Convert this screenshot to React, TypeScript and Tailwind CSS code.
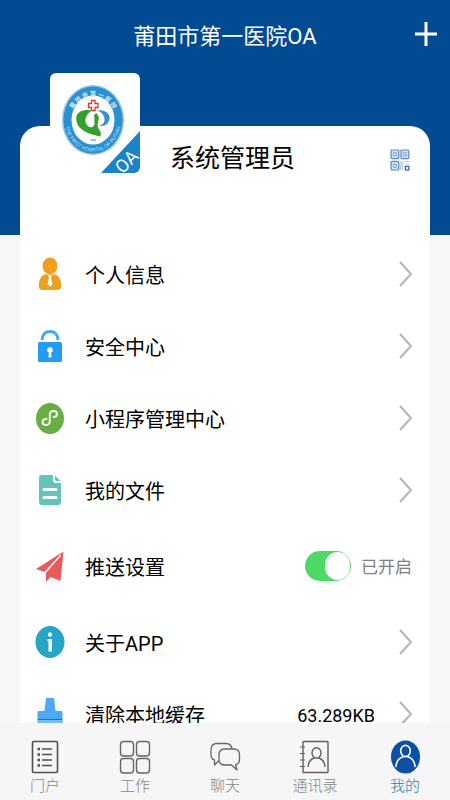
import { useState } from "react";
import type { ReactNode } from "react";
import { clsx } from "clsx";

interface MenuItem {
  id: string;
  label: string;
  icon: ReactNode;
  value?: string;
}

interface TabItem {
  id: string;
  label: string;
  icon: ReactNode;
}

function HospitalLogo() {
  return (
    <svg viewBox="0 0 90 100" className="w-[90px] h-[100px] overflow-visible" role="img" aria-label="莆田市第一医院OA">
      <defs>
        <path id="ring-top" d="M19.500 50a23.500 27 0 0 1 47 0" />
        <path id="ring-bottom" d="M15 47a28 31.500 0 0 0 56 0" />
      </defs>
      <ellipse cx="43" cy="47" rx="31" ry="35" fill="#8cc3ea" />
      <ellipse cx="43" cy="47" rx="29.5" ry="33.5" fill="#2b8fd0" />
      <ellipse cx="43" cy="47" rx="21.5" ry="24.5" fill="#fff" />
      <text fill="#d8edfa" fontSize="6" fontWeight="700" textAnchor="middle" className="font-['Noto_Sans_CJK_SC',sans-serif]">
        <textPath href="#ring-top" startOffset="50%">莆 田 市 第 一 医 院</textPath>
      </text>
      <text fill="#bfe0f5" fontSize="5" textAnchor="middle" className="font-['Liberation_Sans',sans-serif]">
        <textPath href="#ring-bottom" startOffset="50%">THE FIRST HOSPITAL OF PUTIAN</textPath>
      </text>
      <path d="M41.500 27.500h3.500v3h3v4h-3v3h-3.500v-3h-3v-4h3z" fill="#fff" stroke="#e0353b" strokeWidth="1.300" />
      <path
        d="M42 37.500c-6-1.500-15.500 0-15.800 7.500C26 54 33 60 50 63.500c1.500-1.500 1-4-.5-6.500-1.500-2-2.500-4-1.500-7.500l1-5-2.500-4.500-2.500 2c1 4 0 6.500.5 9-1 4.500-5 4-7.500 1-3-4-2-10 5-14.500z"
        fill="#33a02c"
      />
      <path
        d="M47 37.500c7-1.500 13.500 2.500 12.500 8.500-1 5-5 8-10.500 6.500 4-.5 6-3.500 5.500-7-.5-4-3.500-7-7.500-8z"
        fill="#3490d0"
      />
      <path d="M40.500 67h5.500" stroke="#6fb1dd" strokeWidth="1.500" />
      <path d="M90 58v36a6 6 0 0 1-6 6H51z" fill="#1b84c9" />
      <text
        x="0"
        y="0"
        fill="#fff"
        fontSize="18"
        textAnchor="middle"
        transform="translate(81 93) rotate(-45)"
        className="font-['Roboto',sans-serif]"
      >
        OA
      </text>
    </svg>
  );
}

function QrIcon() {
  return (
    <svg viewBox="0 0 20 22" className="w-5 h-[22px]" fill="none" aria-hidden="true">
      <g fill="#cfe3f8" stroke="#6286ba" strokeWidth="1.200">
        <rect x="1" y="1" width="7.800" height="8.600" rx="1" />
        <rect x="11" y="1" width="7.800" height="8.600" rx="1" />
        <rect x="1" y="12.400" width="7.800" height="8.600" rx="1" />
      </g>
      <g stroke="#86abdc">
        <rect x="3.500" y="3.700" width="2.800" height="3.200" />
        <rect x="13.500" y="3.700" width="2.800" height="3.200" />
        <rect x="3.500" y="15.100" width="2.800" height="3.200" />
      </g>
      <path d="M10.500 12v9M12.500 12v9" stroke="#c3cfe6" strokeWidth="1.600" />
      <path d="M14 12.500h5M14 15h5" stroke="#b4d0ef" />
      <rect x="15.400" y="17.400" width="3.400" height="3.600" stroke="#3f66a8" strokeWidth="1.300" />
    </svg>
  );
}

function PersonIcon() {
  return (
    <svg viewBox="0 0 30 34" className="w-[30px] h-[34px]" aria-hidden="true">
      <path d="M4 27c0-5 3-9 7-10h8c4 1 7 5 7 10v3c0 2-1.500 3-3.500 3h-15C5.500 33 4 32 4 30z" fill="#eda01f" />
      <ellipse cx="15" cy="9" rx="7.500" ry="8.500" fill="#eda01f" />
      <path d="M8 15.500c4 3.500 10 3.500 14 0" fill="none" stroke="#f8d89c" strokeWidth="1" />
      <path d="M13 18.500h4l-1 2.500 1.500 6-2.500 3-2.500-3 1.500-6z" fill="#fff" />
    </svg>
  );
}

function LockIcon() {
  return (
    <svg viewBox="0 0 30 34" className="w-[30px] h-[34px]" aria-hidden="true">
      <path d="M7 11C7.500 5 10.500 2.500 15 2.500S22.500 5 23 11" fill="none" stroke="#45abf5" strokeWidth="2.800" />
      <rect x="3" y="13" width="24" height="20" rx="1.500" fill="#229bf5" />
      <ellipse cx="15" cy="21" rx="2.800" ry="2.800" fill="#fff" />
      <path d="M14 22h2l.6 6.500h-3.200z" fill="#fff" />
    </svg>
  );
}

function MiniProgramIcon() {
  return (
    <svg viewBox="0 0 30 34" className="w-[30px] h-[34px]" aria-hidden="true">
      <ellipse cx="15" cy="17.500" rx="14" ry="15.500" fill="#6aad45" />
      <path
        d="M11.500 18c-2.500 0-4 1.300-4 3s1.500 3 3.500 3 3.800-1.500 3.800-3.500v-7c0-2 1.700-3.500 3.700-3.500s3.500 1.300 3.500 3-1.500 3-3.500 3"
        fill="none"
        stroke="#f3faee"
        strokeWidth="2"
        strokeLinecap="round"
      />
    </svg>
  );
}

function FileIcon() {
  return (
    <svg viewBox="0 0 30 34" className="w-[30px] h-[34px]" aria-hidden="true">
      <path d="M7 2h11v5c0 2 1 3 3 3h5v19c0 2-1 3-3 3H7c-2 0-3-1-3-3V5c0-2 1-3 3-3z" fill="#62c5bb" />
      <path d="M20 2.500 25.500 8H22c-1.500 0-2-.5-2-2z" fill="#62c5bb" />
      <path d="M9 16.500h12M9 24.500h12" stroke="#fff" strokeWidth="3" strokeLinecap="round" />
    </svg>
  );
}

function PlaneIcon() {
  return (
    <svg viewBox="0 0 30 34" className="w-[30px] h-[34px]" aria-hidden="true">
      <path d="M28.500 2.500 1 20l8.500 3z" fill="#e95a58" />
      <path d="M28.500 2.500 11 24v9l4.500-5 10 4z" fill="#e95a58" />
      <path d="M25.500 6.500 9.500 24" stroke="#fff" strokeWidth="1.200" />
    </svg>
  );
}

function InfoIcon() {
  return (
    <svg viewBox="0 0 30 34" className="w-[30px] h-[34px]" aria-hidden="true">
      <ellipse cx="15" cy="17" rx="14.500" ry="16" fill="#26a5c4" />
      <ellipse cx="15" cy="9.500" rx="2" ry="2.200" fill="#fff" />
      <path d="M12.500 14H17v12.500h-3.500V16.500h-1z" fill="#fff" />
    </svg>
  );
}

function BrushIcon() {
  return (
    <svg viewBox="0 0 30 34" className="w-[30px] h-[34px]" aria-hidden="true">
      <path d="M11 1h8l1.500 13H26c1 0 1.500.5 1.500 1.500V22h-25v-6.500C2.500 14.500 3 14 4 14h5.500z" fill="#4ba9f6" />
      <path d="M2.500 22h25v1.500h-25z" fill="#1673cf" />
      <path d="M2.500 23.500h25L29 33H1z" fill="#6cc0fa" />
    </svg>
  );
}

function Chevron() {
  return (
    <svg viewBox="0 0 14 28" className="w-[14px] h-7" fill="none" aria-hidden="true">
      <path d="m1 2 11 12L1 26" stroke="#b3b3b3" strokeWidth="2" />
    </svg>
  );
}

function PortalIcon() {
  return (
    <svg viewBox="0 0 32 34" className="w-8 h-[34px]" fill="none" stroke="#505050" aria-hidden="true">
      <rect x="3.500" y="1.500" width="25" height="31" rx="1.500" strokeWidth="1.600" />
      <path d="M13 9h10M13 14.500h10M13 20h10M13 25.500h10" strokeWidth="1.300" />
      <path d="M8.500 9h2.500M8.500 14.500h2.500M8.500 20h2.500M8.500 25.500h2.500" strokeWidth="2.400" />
    </svg>
  );
}

function WorkIcon() {
  return (
    <svg viewBox="0 0 32 34" className="w-8 h-[34px]" fill="none" stroke="#666" strokeWidth="1.400" aria-hidden="true">
      <rect x="1.500" y="1.500" width="13" height="14.500" rx="3" />
      <rect x="17.500" y="1.500" width="13" height="14.500" rx="3" />
      <rect x="1.500" y="18.500" width="13" height="14.500" rx="3" />
      <rect x="17.500" y="18.500" width="13" height="14.500" rx="3" />
    </svg>
  );
}

function ChatIcon() {
  return (
    <svg viewBox="0 0 32 34" className="w-8 h-[34px]" fill="none" stroke="#666" strokeWidth="1.300" strokeLinejoin="round" aria-hidden="true">
      <path d="M10 20.500 5.500 25v-5C3 19.500 2 17.500 2 14V9.500C2 5.500 4 3.500 8 3.500h9c4 0 5.500 1.500 6 5.500" />
      <path d="M15.500 9H25c3.500 0 5.500 2 5.500 6v4.500c0 3.500-1.500 5-4 5.500l1.500 5-5.500-5h-7c-3.500 0-5.500-2-5.500-5.500V15c0-4 2-6 5.500-6z" />
    </svg>
  );
}

function ContactsIcon() {
  return (
    <svg viewBox="0 0 32 34" className="w-8 h-[34px]" fill="none" stroke="#606060" strokeWidth="1.400" aria-hidden="true">
      <rect x="4" y="1.500" width="25" height="31" rx=".8" />
      <path d="M1 7h5M1 13.500h5M1 20h5M1 26.500h5" strokeWidth="1.200" />
      <ellipse cx="17.500" cy="13" rx="4.500" ry="5.300" />
      <path d="M9 27c.3-5 2.800-8 6.500-9M26 27c-.3-5-2.800-8-6.500-9" />
    </svg>
  );
}

function MineIcon() {
  return (
    <svg viewBox="0 0 32 34" className="w-8 h-[34px]" fill="none" aria-hidden="true">
      <ellipse cx="16.500" cy="17" rx="14.500" ry="16.500" fill="#0b50a4" />
      <g stroke="#fff" strokeWidth="1.600" strokeLinecap="round">
        <ellipse cx="16.500" cy="11" rx="4.800" ry="5.600" />
        <path d="M7 26.500c.5-5.500 3.500-9 7.500-9.800M26 26.500c-.5-5.500-3.500-9-7.500-9.800" />
      </g>
    </svg>
  );
}

const accountItems: MenuItem[] = [
  { id: "profile", label: "个人信息", icon: <PersonIcon /> },
  { id: "security", label: "安全中心", icon: <LockIcon /> },
  { id: "mini-programs", label: "小程序管理中心", icon: <MiniProgramIcon /> },
  { id: "files", label: "我的文件", icon: <FileIcon /> },
];

const appItems: MenuItem[] = [
  { id: "about", label: "关于APP", icon: <InfoIcon /> },
  { id: "cache", label: "清除本地缓存", icon: <BrushIcon />, value: "63.289KB" },
];

const tabs: TabItem[] = [
  { id: "portal", label: "门户", icon: <PortalIcon /> },
  { id: "work", label: "工作", icon: <WorkIcon /> },
  { id: "chat", label: "聊天", icon: <ChatIcon /> },
  { id: "contacts", label: "通讯录", icon: <ContactsIcon /> },
  { id: "mine", label: "我的", icon: <MineIcon /> },
];

function MenuRow({ item }: { item: MenuItem }) {
  return (
    <li>
      <button type="button" className="flex w-full h-18 items-center pl-[15px] pr-[17px] text-left">
        {item.icon}
        <span className="ml-5 flex-1 pt-1 text-xl">{item.label}</span>
        {item.value && <span className="mr-6 pt-1 text-lg">{item.value}</span>}
        <Chevron />
      </button>
    </li>
  );
}

export default function App() {
  const [pushEnabled, setPushEnabled] = useState(true);
  const [activeTab, setActiveTab] = useState("mine");

  return (
    <div className="flex h-screen flex-col overflow-hidden bg-[#f7f7f7] text-black font-['Roboto','Noto_Sans_CJK_SC',sans-serif]">
      <header className="grid h-[235px] shrink-0 grid-cols-[1fr_auto_1fr] items-start bg-[#024a92] text-white">
        <h1 className="col-start-2 flex h-[72px] items-center text-[22px]">莆田市第一医院OA</h1>
        <button type="button" aria-label="添加" className="flex h-[68px] items-center justify-self-end pr-3">
          <svg viewBox="0 0 24 24" className="w-6 h-6" fill="none" aria-hidden="true">
            <path d="M12 0v24M1 12h22" stroke="#fff" strokeWidth="3" />
          </svg>
        </button>
      </header>

      <main className="-mt-[109px] flex min-h-0 flex-1 flex-col px-5">
        <section className="min-h-0 flex-1 rounded-t-[20px] bg-white">
          <div className="flex h-28 items-start pl-[30px] pr-5">
            <div className="-mt-[53px] rounded-md bg-white">
              <HospitalLogo />
            </div>
            <h2 className="ml-[30px] flex h-[66px] flex-1 items-center text-[25px]">系统管理员</h2>
            <button type="button" aria-label="二维码" className="flex h-[67px] items-center">
              <QrIcon />
            </button>
          </div>

          <ul>
            {accountItems.map((item) => (
              <MenuRow key={item.id} item={item} />
            ))}
            <li className="flex h-20 items-center pl-[15px] pr-[18px]">
              <PlaneIcon />
              <label htmlFor="push" className="ml-5 flex-1 pt-1 text-xl">
                推送设置
              </label>
              <input
                id="push"
                type="checkbox"
                role="switch"
                checked={pushEnabled}
                onChange={(e) => setPushEnabled(e.target.checked)}
                className="flex w-[46px] h-[30px] appearance-none items-center justify-start rounded-full bg-gray-300 p-px checked:justify-end checked:bg-[#4cd964] before:h-7 before:w-[25px] before:rounded-full before:bg-white"
              />
              <span className="ml-[10px] pt-1 text-[17px] text-[#808080]">{pushEnabled ? "已开启" : "已关闭"}</span>
            </li>
            {appItems.map((item) => (
              <MenuRow key={item.id} item={item} />
            ))}
          </ul>
        </section>
      </main>

      <nav className="z-10 grid h-[77px] shrink-0 grid-cols-5 bg-[#f6f6f6]">
        {tabs.map((tab) => (
          <button
            key={tab.id}
            type="button"
            onClick={() => setActiveTab(tab.id)}
            className={clsx(
              "flex flex-col items-center pt-[17px] text-[15px] leading-6 font-light",
              activeTab === tab.id ? "text-[#2f78bc]" : "text-[#858585]"
            )}
          >
            {tab.icon}
            <span>{tab.label}</span>
          </button>
        ))}
      </nav>
    </div>
  );
}
